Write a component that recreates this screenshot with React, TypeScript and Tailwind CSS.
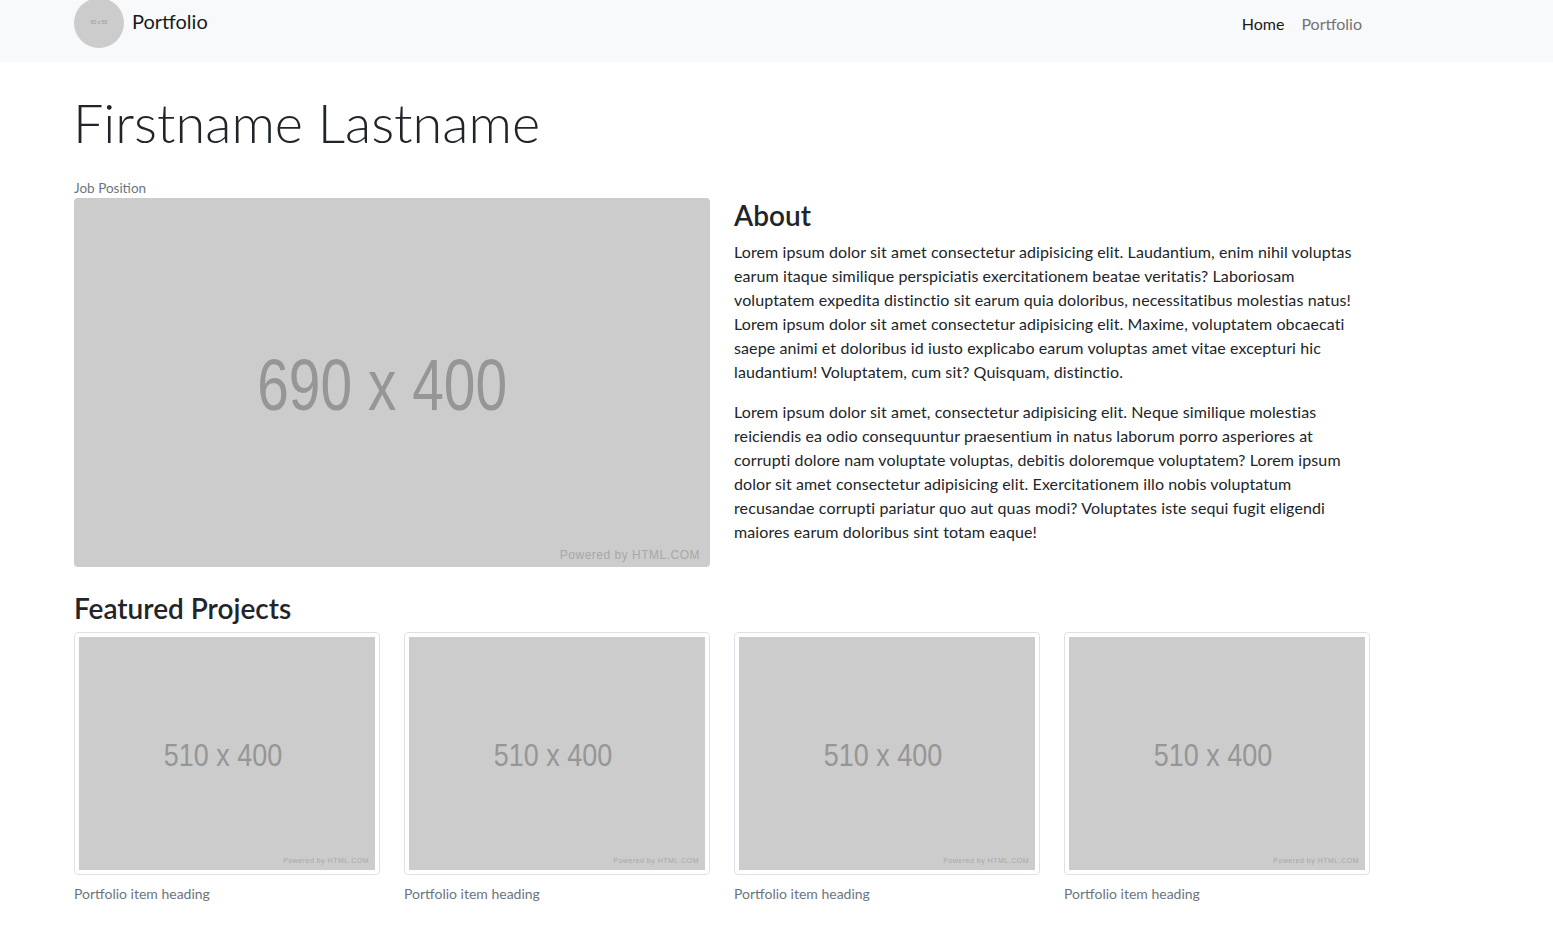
const lorem1 =
  "Lorem ipsum dolor sit amet consectetur adipisicing elit. Laudantium, enim nihil voluptas earum itaque similique perspiciatis exercitationem beatae veritatis? Laboriosam voluptatem expedita distinctio sit earum quia doloribus, necessitatibus molestias natus! Lorem ipsum dolor sit amet consectetur adipisicing elit. Maxime, voluptatem obcaecati saepe animi et doloribus id iusto explicabo earum voluptas amet vitae excepturi hic laudantium! Voluptatem, cum sit? Quisquam, distinctio.";
const lorem2 =
  "Lorem ipsum dolor sit amet, consectetur adipisicing elit. Neque similique molestias reiciendis ea odio consequuntur praesentium in natus laborum porro asperiores at corrupti dolore nam voluptate voluptas, debitis doloremque voluptatem? Lorem ipsum dolor sit amet consectetur adipisicing elit. Exercitationem illo nobis voluptatum recusandae corrupti pariatur quo aut quas modi? Voluptates iste sequi fugit eligendi maiores earum doloribus sint totam eaque!";

function Placeholder({ label, big }: { label: string; big?: boolean }) {
  return (
    <div
      className={`relative flex items-center justify-center bg-[#cccccc] ${
        big ? "h-[369px] w-full rounded-[4px]" : "h-[233px] w-full"
      }`}
    >
      <span
        className={`font-['Liberation_Sans',Arial,sans-serif] text-[#969696] ${
          big
            ? "text-[72px] scale-x-[0.79] -translate-x-[10px] translate-y-[2px]"
            : "text-[31px] scale-x-[0.87] -translate-x-[4px] translate-y-[2px]"
        } leading-none inline-block`}
      >
        {label}
      </span>
      <span
        className={`absolute font-['Liberation_Sans',Arial,sans-serif] tracking-[0.5px] text-[#a8a8a8] ${
          big ? "bottom-[3px] right-[10px] text-[12px]" : "bottom-[4px] right-[6px] text-[7px]"
        }`}
      >
        Powered by HTML.COM
      </span>
    </div>
  );
}

export default function App() {
  return (
    <div className="min-h-screen bg-white font-['Lato','Noto_Sans',sans-serif] text-[#212529]">
      <nav className="h-[62px] bg-[#f8f9fa]">
        <div className="ml-[74px] w-[1296px] flex items-start justify-between">
          <a className="flex items-center gap-[8px] -mt-[2px]">
            <div className="w-[50px] h-[50px] rounded-full bg-[#cccccc] flex items-center justify-center">
              <span className="text-[5px] text-[#969696] font-['Liberation_Sans',sans-serif]">50 x 50</span>
            </div>
            <span className="text-[20px] text-[#1a1a1a] -mt-[4px]">Portfolio</span>
          </a>
          <ul className="flex gap-[17px] pt-[12px] pr-[8px] text-[16px]">
            <li className="text-[#1a1a1a]">Home</li>
            <li className="text-[#737373]">Portfolio</li>
          </ul>
        </div>
      </nav>

      <main className="ml-[74px] w-[1296px]">
        <h1 className="mt-[28px] -ml-[1px] text-[54px] font-light leading-[66px]">Firstname Lastname</h1>
        <p className="mt-[22px] text-[13.5px] leading-[20px] text-[#6c757d]">Job Position</p>

        <div className="grid grid-cols-2 gap-[24px]">
          <Placeholder label="690 x 400" big />
          <div>
            <h2 className="text-[28px] font-semibold leading-[34px] mb-[8px]">About</h2>
            <p className="text-[16px] leading-[24px] tracking-[0.1px] mb-[16px]">{lorem1}</p>
            <p className="text-[16px] leading-[24px] tracking-[0.1px]">{lorem2}</p>
          </div>
        </div>

        <h2 className="mt-[24px] mb-[7px] text-[28px] font-semibold leading-[34px]">Featured Projects</h2>
        <div className="grid grid-cols-4 gap-[24px]">
          {[0, 1, 2, 3].map((i) => (
            <div key={i}>
              <div className="border border-[#dee2e6] rounded-[4px] p-[4px] bg-white">
                <Placeholder label="510 x 400" />
              </div>
              <p className="mt-[9px] text-[14px] leading-[20px] text-[#6c757d]">Portfolio item heading</p>
            </div>
          ))}
        </div>
      </main>
    </div>
  );
}
